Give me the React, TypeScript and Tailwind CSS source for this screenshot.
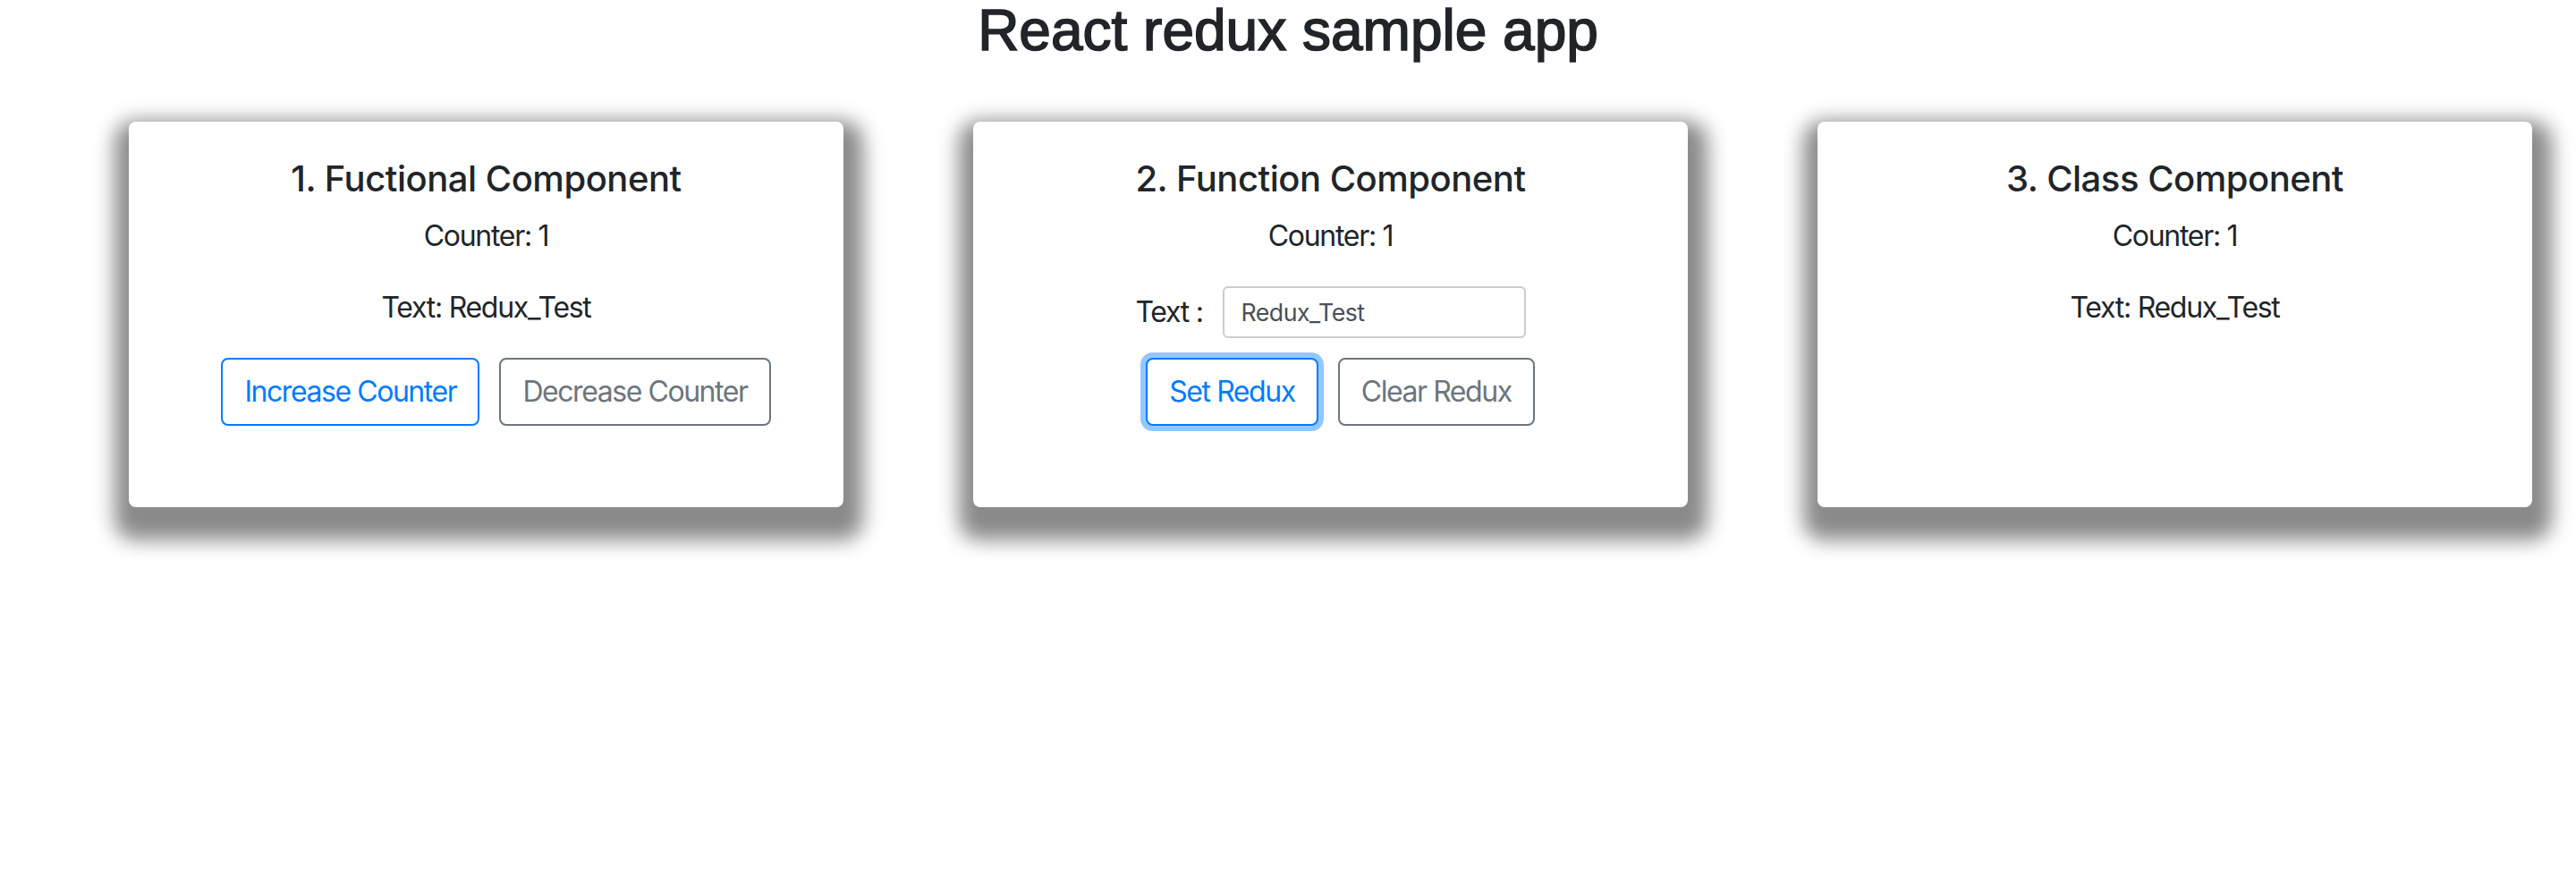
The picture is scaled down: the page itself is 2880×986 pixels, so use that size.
import { useState } from "react";

function Card({ children }: { children: React.ReactNode }) {
  return (
    <div className="w-[799px] h-[431px] shrink-0 bg-white rounded-[8px] shadow-[3px_18px_22px_19px_#8a8a8a] px-[40px] pt-[40px] text-center">
      {children}
    </div>
  );
}

function Heading({ children }: { children: React.ReactNode }) {
  return (
    <h5 className="text-[40px] leading-[48px] font-medium tracking-[-0.012em] mb-[16px]">{children}</h5>
  );
}

const body = "text-[32px] leading-[48px] tracking-[-0.04em]";

const btnBlue =
  "ml-[22px] border-2 border-[#007bff] text-[#007bff] rounded-[8px] px-[24px] py-[12px] text-[32px] leading-[48px] tracking-[-0.045em] bg-white";
const btnGray =
  "ml-[22px] border-2 border-[#6c757d] text-[#6c757d] rounded-[8px] px-[24px] py-[12px] text-[32px] leading-[48px] tracking-[-0.045em] bg-white";

export default function App() {
  const [counter] = useState(1);
  const [text, setText] = useState("Redux_Test");

  return (
    <div className="min-h-screen bg-white text-[#212529] font-['Inter',sans-serif]">
      <h1 className="pt-[2px] text-center text-[64px] leading-none font-normal [-webkit-text-stroke:1.6px_#212529] font-['Liberation_Sans',Arial,sans-serif]">
        React redux sample app
      </h1>

      <div className="flex gap-[145px] pl-[144px] mt-[70px]">
        <Card>
          <Heading>1. Fuctional Component</Heading>
          <p className={body + " mb-[32px]"}>Counter: {counter}</p>
          <p className={body + " mb-[32px]"}>Text: {text}</p>
          <div className="flex justify-center">
            <button className={btnBlue}>Increase Counter</button>
            <button className={btnGray}>Decrease Counter</button>
          </div>
        </Card>

        <Card>
          <Heading>2. Function Component</Heading>
          <p className={body + " mb-[32px]"}>Counter: {counter}</p>
          <div className="flex justify-center items-center gap-[22px] h-[58px]">
            <span className={body}>Text :</span>
            <input
              value={text}
              onChange={(e) => setText(e.target.value)}
              className="w-[339px] h-[58px] border-2 border-[#cccccc] rounded-[6px] px-[19px] text-[26.7px] tracking-[-0.02em] text-[#495057] outline-none"
            />
          </div>
          <div className="flex justify-center mt-[22px]">
            <button className={btnBlue + " shadow-[0_0_0_6px_rgba(38,143,255,0.5)]"}>Set Redux</button>
            <button className={btnGray}>Clear Redux</button>
          </div>
        </Card>

        <Card>
          <Heading>3. Class Component</Heading>
          <p className={body + " mb-[32px]"}>Counter: {counter}</p>
          <p className={body + " mb-[32px]"}>Text: {text}</p>
        </Card>
      </div>
    </div>
  );
}
